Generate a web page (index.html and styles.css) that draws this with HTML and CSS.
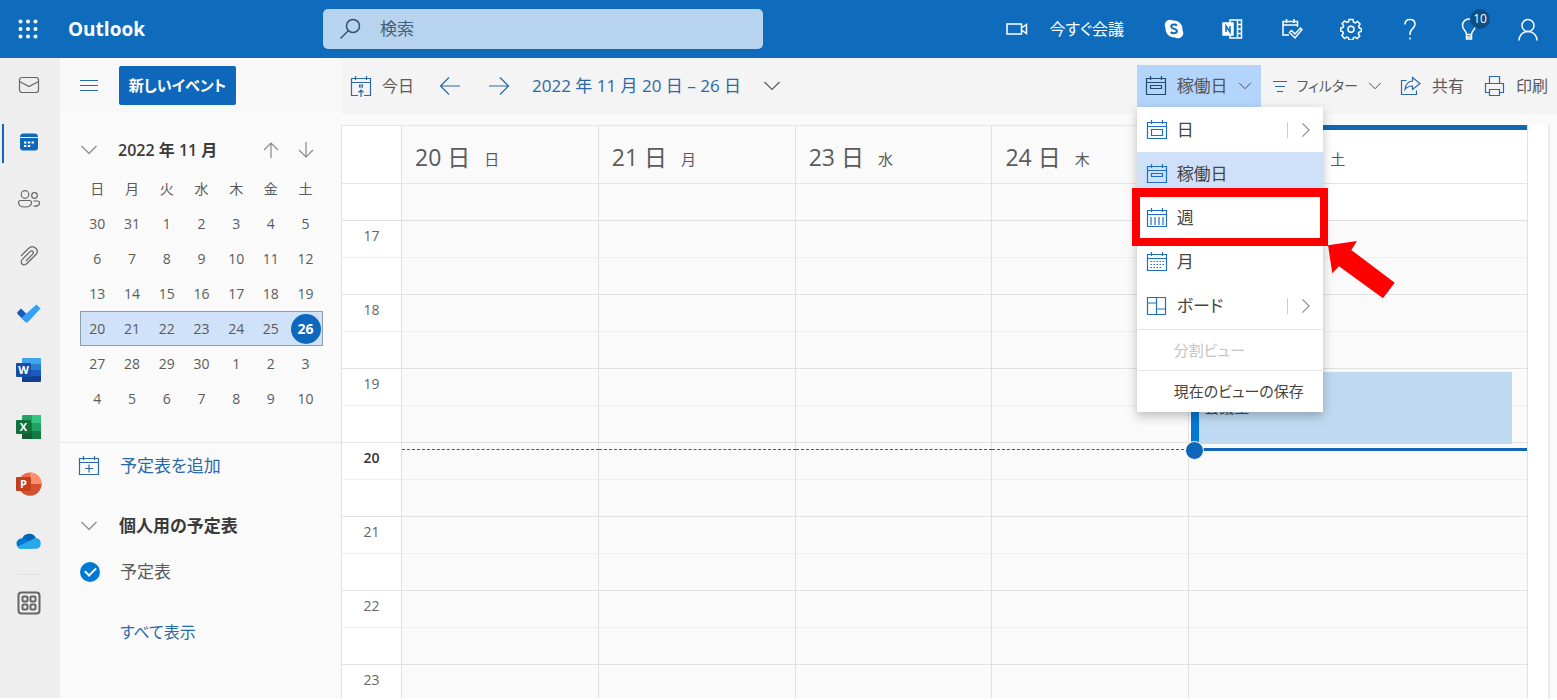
FILE: index.html
```
<!DOCTYPE html>
<html lang="ja">
<head>
<meta charset="utf-8">
<meta name="viewport" content="width=device-width, initial-scale=1">
<title>Outlook</title>
<link rel="stylesheet" href="styles.css">
</head>
<body>
<svg class="defs" aria-hidden="true">
  <symbol id="i-down" viewBox="0 0 18 18"><path d="M1.500 5l7.500 7.500L16.500 5"/></symbol>
  <symbol id="i-right" viewBox="0 0 18 18"><path d="M5 1.500l7.500 7.500L5 16.500"/></symbol>
  <symbol id="i-cal" viewBox="0 0 22 22"><path d="M1.500 3.500h19v16h-19zM1.500 7.500h19M5.500 1v4M16.500 1v4"/></symbol>
</svg>
<header class="top">
  <button class="top-btn" aria-label="アプリ起動ツール"><svg width="20" height="20" viewBox="0 0 20 20" fill="#fff"><circle cx="2.500" cy="2.500" r="2"/><circle cx="10" cy="2.500" r="2"/><circle cx="17.500" cy="2.500" r="2"/><circle cx="2.500" cy="10" r="2"/><circle cx="10" cy="10" r="2"/><circle cx="17.500" cy="10" r="2"/><circle cx="2.500" cy="17.500" r="2"/><circle cx="10" cy="17.500" r="2"/><circle cx="17.500" cy="17.500" r="2"/></svg></button>
  <a class="brand" href="#">Outlook</a>
  <label class="search"><svg class="line" width="22" height="22" viewBox="0 0 22 22"><circle cx="14" cy="8" r="6.500"/><path d="M9.500 12.500L1.500 20.500"/></svg><input type="text" aria-label="検索" placeholder="検索"></label>
  <nav class="top-right">
    <button class="meet"><svg class="line" width="22" height="16" viewBox="0 0 22 16"><path d="M1 3h14.500v10H1zM15.500 7l5-3.500v9l-5-3.500"/></svg><span>今すぐ会議</span></button>
    <button class="top-btn" aria-label="Skype"><svg width="20" height="20" viewBox="0 0 20 20"><circle cx="10" cy="10" r="8.500" fill="#fff"/><circle cx="6" cy="6" r="5.300" fill="#fff"/><circle cx="14" cy="14" r="5.300" fill="#fff"/><path d="M13 6.600C11.500 5 7.300 5 7.300 7.600c0 2.700 5.600 1.800 5.600 4.500 0 2.700-4.500 2.700-6.100.9" fill="none" stroke="#0f6cbd" stroke-width="2"/></svg></button>
    <button class="top-btn" aria-label="OneNote"><svg class="line" width="22" height="22" viewBox="0 0 22 22"><path d="M8 5V2h11.500v18H8v-3M15.500 2v18M15.500 6.500h4M15.500 11h4M15.500 15.500h4"/><path d="M1 5h10v12H1z" fill="#fff"/><path d="M4 14V8l4 6V8" stroke="#0f6cbd"/></svg></button>
    <button class="top-btn" aria-label="タスク"><svg class="line" width="22" height="22" viewBox="0 0 22 22"><path d="M8 17H2V3.500h14.500V9M2 7h14.500M5.500 1v4M13 1v4M8.500 14.500l2-2 3.500 3.500 5.500-6 1.500 1.500-7 8.500z"/></svg></button>
    <button class="top-btn" aria-label="設定"><svg class="line" width="22" height="22" viewBox="0 0 22 22"><path d="M9 1.500h4l.5 2.700 1.700.7 2.300-1.500 2.600 2.700-1.500 2.300.7 1.600 2 .5v3l-2.200.6-.8 1.600 1.500 2.300-2.600 2.600-2.200-1.500-1.600.7-.4 2.200H9l-.5-2.200-1.700-.7-2.300 1.500L1.900 17.500l1.500-2.300-.7-1.600L.7 13v-3l2.200-.5.7-1.600-1.500-2.300L4.700 3l2.200 1.500 1.700-.7z"/><circle cx="11" cy="11.300" r="3"/></svg></button>
    <button class="top-btn" aria-label="ヘルプ"><svg class="line" width="20" height="24" viewBox="0 0 20 24"><path d="M5 7.500C5 4.500 7 2.500 10 2.500s5 2 5 4.700c0 4.200-5 4.700-5 9.300v1.500M10 20.500v2"/></svg></button>
    <button class="top-btn tips" aria-label="ヒント"><svg class="line" width="20" height="24" viewBox="0 0 20 24"><path d="M7.500 17.500c0-4-4-4.500-4-9a6.500 6.500 0 0 1 13 0c0 4.500-4 5-4 9zM7.500 17.500V22h5v-4.500M7.500 20h5"/></svg><span class="badge">10</span></button>
    <button class="top-btn" aria-label="アカウント"><svg class="line" width="22" height="24" viewBox="0 0 22 24"><circle cx="11" cy="8.500" r="6"/><path d="M2 23.500c0-5.500 4-9 9-9s9 3.500 9 9"/></svg></button>
  </nav>
</header>
<div class="app">
  <nav class="rail">
    <a href="#" aria-label="メール"><svg class="line" width="22" height="22" viewBox="0 0 22 22"><rect x="1.500" y="3.500" width="19" height="15" rx="2.500"/><path d="M1.500 7.500l9.500 5 9.500-5"/></svg></a>
    <a href="#" class="current" aria-label="予定表"><svg width="20" height="20" viewBox="0 0 20 20" fill="#0f67bc"><path d="M1 5a3.500 3.500 0 0 1 3.500-3.500h11A3.500 3.500 0 0 1 19 5zM1 6h18v9.500a3 3 0 0 1-3 3H4a3 3 0 0 1-3-3z"/><path d="M5 10.500h10M5 14h6.500" stroke="#fff" stroke-width="2.200" stroke-dasharray="2.400 1.400"/></svg></a>
    <a href="#" aria-label="連絡先"><svg class="line" width="24" height="22" viewBox="0 0 24 22"><circle cx="8" cy="6.500" r="3.800"/><circle cx="17.500" cy="7.500" r="2.800"/><path d="M3.500 12.500h9a2 2 0 0 1 2 2c0 3-2.500 4.500-6.500 4.500s-6.500-1.500-6.500-4.500a2 2 0 0 1 2-2zM16.500 13h4a2 2 0 0 1 2 2c0 2.500-2.500 3.500-6 3"/></svg></a>
    <a href="#" aria-label="ファイル"><svg class="line" width="22" height="22" viewBox="0 0 22 22"><path d="M3 11l7.500-7.500c3-3 6-1.500 7.500 0s2 4-.5 6.500L9 18.500c-1.800 1.800-4 1.500-5 .5s-1.300-3 .5-4.800l7.500-7.500c2-2 4.500.5 2.700 2.500L8 16"/></svg></a>
    <a href="#" aria-label="To Do"><svg width="26" height="20" viewBox="0 0 26 20"><path d="M5 5.500l8.500 8.500-4.500 4.500-7.500-7.500a1.500 1.500 0 0 1 0-2z" fill="#185abd"/><path d="M20.500 1l4 4-12 13a2.200 2.200 0 0 1-3.500.2l-3.500-4z" fill="#37a0f4" transform="translate(0 .5)"/></svg></a>
    <a href="#" aria-label="Word"><svg width="26" height="24" viewBox="0 0 26 24"><path d="M6 0h18a1 1 0 0 1 1 1v5H6z" fill="#41a5ee"/><path d="M6 6h19v6H6z" fill="#2b7cd3"/><path d="M6 12h19v6H6z" fill="#185abd"/><path d="M6 18h19v5a1 1 0 0 1-1 1H7a1 1 0 0 1-1-1z" fill="#103f91"/><rect y="5" width="15" height="14" rx="1" fill="#174ea6"/><text x="7.500" y="16" class="app-letter">W</text></svg></a>
    <a href="#" aria-label="Excel"><svg width="26" height="24" viewBox="0 0 26 24"><path d="M7 0h18v8H6V1z" fill="#21a366"/><path d="M16 0h9v8h-9z" fill="#33c481"/><path d="M6 8h10v8H6z" fill="#107c41"/><path d="M16 8h9v8h-9z" fill="#21a366"/><path d="M6 16h19v8H6z" fill="#185c37"/><path d="M16 16h9v7l-1 1h-8z" fill="#107c41"/><rect y="5" width="15" height="14" rx="1" fill="#0f7039"/><text x="7.500" y="16" class="app-letter">X</text></svg></a>
    <a href="#" aria-label="PowerPoint"><svg width="26" height="24" viewBox="0 0 26 24"><circle cx="14" cy="12" r="11.500" fill="#ed6c47"/><path d="M14 .5A11.500 11.500 0 0 1 25.500 12H14z" fill="#ff8f6b"/><path d="M2.500 12h23a11.500 11.500 0 0 1-23 0z" fill="#d35230"/><rect y="5" width="15" height="14" rx="1" fill="#c43e1c"/><text x="7.500" y="16" class="app-letter">P</text></svg></a>
    <a href="#" aria-label="OneDrive"><svg width="26" height="18" viewBox="0 0 26 18"><path d="M6 7a7.500 7.500 0 0 1 14-1l-4 6-11-1z" fill="#0364b8"/><path d="M5.500 6.500C9 6 11 8 18 12l-5 4.500H5.500a5 5 0 0 1 0-10z" fill="#0078d4"/><path d="M20 6a5.500 5.500 0 0 1 .5 10.800L4.500 17c-1.500-.3-2.500-1-3.200-2.200L16 7.500A6 6 0 0 1 20 6z" fill="#28a8ea"/></svg></a>
    <span class="rail-line"></span>
    <a href="#" aria-label="その他のアプリ"><svg class="line thick" width="24" height="24" viewBox="0 0 24 24"><rect x="1.500" y="1.500" width="21" height="21" rx="3"/><rect x="5.500" y="5.500" width="5" height="5" rx="1"/><rect x="13.500" y="5.500" width="5" height="5" rx="1"/><rect x="5.500" y="13.500" width="5" height="5" rx="1"/><rect x="13.500" y="13.500" width="5" height="5" rx="1"/></svg></a>
  </nav>
  <aside class="side">
    <div class="side-bar">
      <button class="plain blue" aria-label="メニュー"><svg class="line" width="18" height="14" viewBox="0 0 18 14"><path d="M0 2.500h18M0 7.500h18M0 12.500h18"/></svg></button>
      <button class="new">新しいイベント</button>
    </div>
    <section class="mini">
      <div class="mini-head">
        <button class="plain" aria-label="折りたたむ"><svg class="line" width="18" height="18"><use href="#i-down"/></svg></button>
        <h2>2022 年 11 月</h2>
        <button class="plain" aria-label="前の月"><svg class="line" width="18" height="18" viewBox="0 0 18 18"><path d="M9 17V2M2 9l7-7 7 7"/></svg></button>
        <button class="plain" aria-label="次の月"><svg class="line" width="18" height="18" viewBox="0 0 18 18"><path d="M9 1v15M2 9l7 7 7-7"/></svg></button>
      </div>
      <table>
        <thead><tr><th>日</th><th>月</th><th>火</th><th>水</th><th>木</th><th>金</th><th>土</th></tr></thead>
        <tbody>
          <tr><td>30</td><td>31</td><td>1</td><td>2</td><td>3</td><td>4</td><td>5</td></tr>
          <tr><td>6</td><td>7</td><td>8</td><td>9</td><td>10</td><td>11</td><td>12</td></tr>
          <tr><td>13</td><td>14</td><td>15</td><td>16</td><td>17</td><td>18</td><td>19</td></tr>
          <tr class="week"><td>20</td><td>21</td><td>22</td><td>23</td><td>24</td><td>25</td><td><span class="today">26</span></td></tr>
          <tr><td>27</td><td>28</td><td>29</td><td>30</td><td>1</td><td>2</td><td>3</td></tr>
          <tr><td>4</td><td>5</td><td>6</td><td>7</td><td>8</td><td>9</td><td>10</td></tr>
        </tbody>
      </table>
    </section>
    <section class="cals">
      <a class="row add" href="#"><svg class="line" width="22" height="22" viewBox="0 0 22 22"><use href="#i-cal"/><path d="M11 9.500v8M7 13.500h8"/></svg><span>予定表を追加</span></a>
      <button class="row group"><svg class="line" width="18" height="18"><use href="#i-down"/></svg><span>個人用の予定表</span></button>
      <label class="row item"><input type="checkbox" checked><span>予定表</span></label>
      <a class="row all" href="#">すべて表示</a>
    </section>
  </aside>
  <main class="main">
    <div class="tools">
      <button class="tool today-btn"><svg class="line blue" width="22" height="22" viewBox="0 0 22 22"><path d="M8 20.500H1.500v-17h19v17H14M1.500 7.500h19M5.500 1v4M16.500 1v4M11 22v-7M8.500 17.500l2.500-2.500 2.500 2.500M9.500 10h3v2h-3z"/></svg><span>今日</span></button>
      <button class="tool arrow" aria-label="前へ"><svg class="line blue" width="22" height="20" viewBox="0 0 22 20"><path d="M21 10H1.500M10 1.500L1.500 10l8.500 8.500"/></svg></button>
      <button class="tool arrow" aria-label="次へ"><svg class="line blue" width="22" height="20" viewBox="0 0 22 20"><path d="M1 10h19.500M12 1.500l8.500 8.500-8.500 8.500"/></svg></button>
      <button class="tool range"><span class="blue">2022 年 11 月 20 日 – 26 日</span><svg class="line" width="18" height="18"><use href="#i-down"/></svg></button>
      <div class="tools-right">
        <div class="view">
          <button class="tool view-btn" aria-expanded="true"><svg class="line" width="22" height="22" viewBox="0 0 22 22"><use href="#i-cal"/><path d="M5.500 10.500h11v3h-11z"/></svg><span>稼働日</span><svg class="line chev" width="14" height="14"><use href="#i-down"/></svg></button>
          <div class="menu" role="menu">
            <button class="mi" role="menuitem"><svg class="line" width="22" height="22" viewBox="0 0 22 22"><use href="#i-cal"/><path d="M5.500 10.500h11v6h-11z"/></svg><span>日</span><svg class="line sub" width="16" height="16"><use href="#i-right"/></svg></button>
            <button class="mi on" role="menuitem"><svg class="line" width="22" height="22" viewBox="0 0 22 22"><use href="#i-cal"/><path d="M5.500 10.500h11v3h-11z"/></svg><span>稼働日</span></button>
            <button class="mi marked" role="menuitem"><svg class="line" width="22" height="22" viewBox="0 0 22 22"><use href="#i-cal"/><path d="M5 10v8M9 10v8M13 10v8M17 10v8"/></svg><span>週</span></button>
            <button class="mi" role="menuitem"><svg class="line" width="22" height="22" viewBox="0 0 22 22"><use href="#i-cal"/><path d="M4.500 10.500h14M4.500 13.500h14M4.500 16.500h11" stroke-dasharray="1.500 1.500"/></svg><span>月</span></button>
            <button class="mi" role="menuitem"><svg class="line" width="22" height="22" viewBox="0 0 22 22"><path d="M1.500 2.500h18v17h-18zM10.500 2.500v17M1.500 8h9M10.500 14h9"/></svg><span>ボード</span><svg class="line sub" width="16" height="16"><use href="#i-right"/></svg></button>
            <button class="mi text" role="menuitem" disabled>分割ビュー</button>
            <button class="mi text" role="menuitem">現在のビューの保存</button>
            <svg class="pointer" width="68" height="60" viewBox="0 0 68 60"><path d="M1 5.300L30 1l-5.700 9L67.700 42.700 56 58.300 12 26.300l-6.700 7z" fill="#fe0000"/></svg>
          </div>
        </div>
        <button class="tool filter"><svg class="line blue" width="14" height="14" viewBox="0 0 14 14"><path d="M0 2.500h14M2 7.500h10M4 12.500h6"/></svg><span>フィルター</span><svg class="line chev" width="14" height="14"><use href="#i-down"/></svg></button>
        <button class="tool share"><svg class="line blue" width="22" height="22" viewBox="0 0 22 22"><path d="M6.500 5.500h-5v14h15v-4M12.500 2.500l7.500 6-7.500 6V11C9 11 7 12 5 14.500c.5-5 3-8 7.500-8.500z"/></svg><span>共有</span></button>
        <button class="tool print"><svg class="line blue" width="22" height="22" viewBox="0 0 22 22"><path d="M5.500 8.500v-7h10v7M5.500 17.500h-4v-9h18v9h-4M5.500 14.500h10v6h-10z"/></svg><span>印刷</span></button>
      </div>
    </div>
    <div class="cal">
      <div class="col times">
        <div class="head"></div><div class="allday"></div>
        <ol class="slots"><li>17</li><li>18</li><li>19</li><li class="now">20</li><li>21</li><li>22</li><li>23</li></ol>
      </div>
      <div class="col"><div class="head"><b>20 日</b><i>日</i></div><div class="allday"></div><div class="slots dash"></div></div>
      <div class="col"><div class="head"><b>21 日</b><i>月</i></div><div class="allday"></div><div class="slots dash"></div></div>
      <div class="col"><div class="head"><b>23 日</b><i>水</i></div><div class="allday"></div><div class="slots dash"></div></div>
      <div class="col"><div class="head"><b>24 日</b><i>木</i></div><div class="allday"></div><div class="slots dash"></div></div>
      <div class="col sat"><div class="head"><i>土</i></div><div class="allday"></div><div class="slots"><a class="event" href="#">会議室</a><span class="nowline"></span></div></div>
    </div>
  </main>
</div>
</body>
</html>
```
FILE: styles.css
```
* { box-sizing: border-box; }
body {
  margin: 0;
  height: 100vh;
  display: flex;
  flex-direction: column;
  overflow: hidden;
  background: #fff;
  color: #5a5a5a;
  font: 16px/24px "Open Sans", "Noto Sans CJK JP", sans-serif;
  font-feature-settings: "palt";
}
button, input { font: inherit; color: inherit; font-feature-settings: inherit; }
button { border: 0; padding: 0; background: none; white-space: nowrap; }
a { color: inherit; text-decoration: none; }
svg { display: block; flex: none; }
.defs { position: absolute; width: 0; height: 0; }
.line { fill: none; stroke: currentColor; stroke-width: 1.2; }
.thick { stroke-width: 2; }
.blue { color: #2a69a8; }

.top {
  flex: none;
  height: 58px;
  display: flex;
  align-items: center;
  background: #0f6cbd;
  color: #fff;
}
.top-btn { width: 59px; height: 58px; display: grid; place-items: center; }
.top > .top-btn { width: 56px; }
.top .line { stroke-width: 1.5; }
.brand { width: 267px; padding-left: 12px; font-size: 19px; font-weight: 700; }
.search {
  display: flex;
  align-items: center;
  gap: 17px;
  width: 440px;
  height: 40px;
  padding: 0 16px;
  border-radius: 5px;
  background: #b7d3ee;
  color: #38516b;
}
.search input { flex: 1; min-width: 0; border: 0; background: none; outline: 0; font-size: 17px; }
.search input::placeholder { color: #46617c; opacity: 1; }
.top-right { margin-left: auto; display: flex; align-items: center; }
.meet { display: flex; align-items: center; gap: 21px; padding-right: 20px; }
.tips { position: relative; }
.badge {
  position: absolute;
  top: 9px;
  right: 8px;
  width: 20px;
  height: 20px;
  border-radius: 50%;
  background: #0e4d85;
  font-size: 12px;
  line-height: 20px;
}

.app { flex: 1; min-height: 0; display: flex; margin-bottom: 2px; background: #fafafa; }
.rail { flex: none; width: 60px; display: flex; flex-direction: column; background: #eee; color: #666; }
.rail a { height: 57px; padding: 0 3px 3px 0; display: grid; place-items: center; position: relative; }
.rail .current::before { content: ""; position: absolute; left: 2px; top: 9px; width: 2px; height: 39px; background: #0f67bc; }
.rail-line { height: 1px; margin: 3px 20px 1px 17px; background: #e2e2e2; }
.app-letter { fill: #fff; font: 700 11px "Open Sans", sans-serif; text-anchor: middle; }

.side { flex: none; width: 281px; }
.side-bar { height: 54px; padding-left: 20px; display: flex; align-items: center; gap: 21px; background: #f8f8f8; }
.plain { width: 18px; }
.new { width: 117px; height: 39px; border-radius: 2px; background: #0f67bc; color: #fff; font-size: 15px; font-weight: 600; }
.mini { height: 331px; padding: 17px 18px 0 20px; border-bottom: 1px solid #e8e8e8; }
.mini-head { height: 42px; display: flex; align-items: center; gap: 17px; padding-right: 8px; color: #888; }
.mini-head h2 { flex: 1; margin: 0; padding-left: 3px; font-size: 16px; font-weight: 600; color: #3a3a3a; }
.mini table { width: 243px; table-layout: fixed; border-collapse: collapse; }
.mini th, .mini td { height: 35px; padding: 0; text-align: center; font-size: 14px; font-weight: 400; line-height: 20px; }
.week { background: #cfe2f9; outline: 1px solid #8f9cab; outline-offset: -1px; }
.today { display: block; width: 30px; height: 30px; margin: 0 auto; border-radius: 50%; background: #0f67bc; color: #fff; font-weight: 700; line-height: 30px; }
.cals { display: flex; flex-direction: column; padding: 11px 18px 0; font-size: 17px; }
.row { height: 24px; display: flex; align-items: center; }
.add, .all { color: #2a69a8; }
.add { gap: 20px; }
.group { gap: 21px; margin: 36px 0 0 2px; color: #888; }
.group span { color: #3a3a3a; font-weight: 600; }
.item { gap: 20px; margin-top: 22px; padding-left: 2px; }
.item input {
  appearance: none;
  width: 20px;
  height: 20px;
  margin: 0;
  border-radius: 50%;
  background: #0078d4;
  display: grid;
  place-items: center;
}
.item input::before { content: ""; width: 9px; height: 5px; margin-bottom: 3px; border: solid #fff; border-width: 0 0 2px 2px; transform: rotate(-45deg); }
.all { margin-top: 36px; padding-left: 42px; font-size: 16px; }

.main { flex: 1; min-width: 0; display: flex; flex-direction: column; }
.tools { flex: none; height: 56px; display: flex; align-items: center; padding: 0 9px; background: #f4f4f4; }
.tool { display: flex; align-items: center; gap: 10px; }
.arrow { margin-left: 27px; }
.today-btn { margin-right: -2px; }
.range { margin-left: 22px; gap: 22px; font-size: 17px; }
.tools-right { margin-left: auto; display: flex; align-items: center; }
.view { position: relative; }
.view-btn { height: 42px; padding: 0 9px 0 8px; background: #b3d4fb; color: #24496e; font-size: 17px; }
.view-btn span { color: #555; }
.chev { color: #444; }
.filter { margin-left: 12px; font-size: 14px; }
.share { margin-left: 18px; }
.print { margin-left: 20px; }
.menu {
  position: absolute;
  z-index: 2;
  top: 42px;
  left: 0;
  width: 186px;
  padding: 1px 0;
  background: #fff;
  box-shadow: 0 4px 10px rgba(0, 0, 0, .25);
}
.mi { width: 100%; height: 44px; padding: 0 9px; display: flex; align-items: center; gap: 9px; color: #1f6fc0; font-size: 17px; text-align: left; }
.mi span { color: #444; }
.mi .sub { box-sizing: content-box; margin-left: auto; padding-left: 10px; border-left: 1px solid #ccc; color: #888; }
.mi.on { background: #cfe1f8; }
.mi.text { height: 41px; padding-left: 37px; border-top: 1px solid #e8e8e8; color: #444; font-size: 15px; }
.mi.text:disabled { margin-top: 1px; color: #c4c4c4; }
.marked { position: relative; }
.marked::after { content: ""; position: absolute; inset: -8px -5px -6px; border: 8px solid #fe0000; border-top-width: 9px; }
.pointer { position: absolute; left: 190px; top: 133px; }

.cal {
  flex: 1;
  min-height: 0;
  margin: 11px 7px 0 0;
  padding-right: 20px;
  display: grid;
  grid-template-columns: 60px repeat(4, 197fr) 339fr;
  background: #fff;
  border-left: 1px solid #e2e2e2;
  border-right: 2px solid #eaeaea;
  overflow: hidden;
}
.col { min-width: 0; background: #fafafa; border-right: 1px solid #e0e0e0; }
.times { background: #fff; }
.head { height: 59px; padding: 5px 13px 0; display: flex; align-items: center; gap: 14px; border-top: 1px solid #e6e6e6; border-bottom: 1px solid #e6e6e6; }
.head b { font-size: 23px; font-weight: 400; }
.head i { font-size: 15px; font-style: normal; padding-top: 3px; }
.allday { height: 37px; border-bottom: 1px solid #e0e0e0; }
.slots {
  position: relative;
  height: 518px;
  margin: 0;
  padding: 0;
  list-style: none;
  background: repeating-linear-gradient(transparent 0 36px, #efefef 36px 37px, transparent 37px 73px, #e2e2e2 73px 74px);
}
.slots li { height: 74px; padding-top: 4px; text-align: center; font-size: 14px; line-height: 22px; color: #666; }
.slots .now { color: #333; font-weight: 600; }
.dash::after { content: ""; position: absolute; left: 0; right: -1px; top: 228px; border-top: 1px dashed #0f67bc; }
.sat .head, .sat .allday { background: #fff; }
.sat .head { border-top: 5px solid #1267b4; padding: 1px 0 0 141px; }
.event { position: absolute; left: 2px; right: 15px; top: 151px; height: 72px; padding: 23px 0 0 5px; border-left: 8px solid #0078d4; background: #bfdaf0; color: #2c5476; font-size: 15px; }
.nowline { position: absolute; left: 14px; right: 0; top: 227px; height: 3px; background: #1267b4; }
.nowline::before { content: ""; position: absolute; left: -18px; top: -7px; width: 17px; height: 17px; border-radius: 50%; border: 1px solid #fafafa; background: #0f67bc; }
```
